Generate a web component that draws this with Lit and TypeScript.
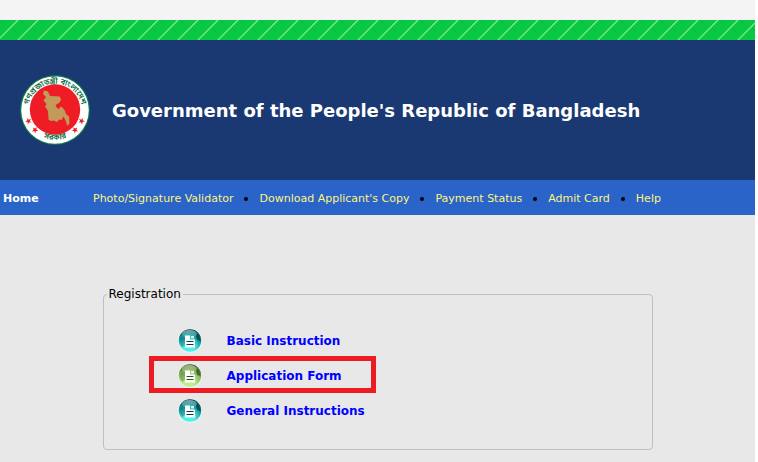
import { LitElement, html, css, svg } from "lit";
import { customElement, property } from "lit/decorators.js";

@customElement("state-seal")
export class StateSeal extends LitElement {
  static styles = css`
    :host { display: block; flex: none; width: 70px; height: 70px; }
    svg { display: block; width: 100%; height: 100%; }
    .script { font-family: "Noto Sans Bengali", "Noto Sans", "DejaVu Sans", sans-serif; font-size: 8px; font-weight: 600; fill: #0b6b40; }
  `;

  private star(x: number, y: number, turn: number) {
    return svg`<path fill="#ed1c24" transform="translate(${x} ${y}) rotate(${turn})"
      d="M0-3.4 .85-1.1 3.2-1 1.3.5 2 2.8 0 1.4-2 2.8-1.3.5-3.2-1-.85-1.1Z"/>`;
  }

  render() {
    return html`
      <svg viewBox="0 0 70 70" role="img" aria-label="Government seal of Bangladesh">
        <circle cx="35" cy="35" r="35" fill="#0b7a4a" />
        <circle cx="35" cy="35" r="33.8" fill="#fff" />
        <circle cx="35" cy="34.5" r="25.2" fill="#ee1c25" />
        <path fill="#c49a5a" d="M24 15.5 28 16.5 30 21 39.5 21.5 41 24 40 27 38 28.5 35.5 30 37 33 39 34 40.5 31.500 43 33 45 36 46 39 49 41.500 49.500 48 47.500 51 45.500 45.500 43.500 41.500 41.500 45 39 44.500 37 47 34 45.500 31 46 28.500 44.500 28 36 25 31.500 26.500 29 23.500 25.500 26 22 23 19Z" />
        <path id="upper" fill="none" d="M9 43A27 27 0 1 1 61 43" />
        <path id="lower" fill="none" d="M13 56A32 32 0 0 0 57 56" />
        <text class="script" text-anchor="middle"><textPath href="#upper" startOffset="50%">গণপ্রজাতন্ত্রী বাংলাদেশ</textPath></text>
        <text class="script" text-anchor="middle"><textPath href="#lower" startOffset="50%">সরকার</textPath></text>
        ${this.star(8.5, 46, -25)}${this.star(15, 55, -40)}${this.star(61.5, 46, 25)}${this.star(55, 55, 40)}
      </svg>`;
  }
}

@customElement("form-orb")
export class FormOrb extends LitElement {
  @property() tone = "teal";

  static styles = css`
    :host { display: block; flex: none; width: 24px; height: 24px; }
    svg { display: block; width: 100%; height: 100%; }
  `;

  render() {
    const green = this.tone === "green";
    const [dark, mid, light] = green ? ["#35541c", "#8cb862", "#baf08c"] : ["#053a40", "#159ea2", "#4ef0ea"];
    return html`
      <svg viewBox="0 0 24 24" aria-hidden="true">
        <defs>
          <radialGradient id="ball" cx=".45" cy=".85" r=".85">
            <stop offset="0" stop-color=${light} />
            <stop offset=".3" stop-color=${light} />
            <stop offset=".65" stop-color=${mid} />
            <stop offset="1" stop-color=${dark} />
          </radialGradient>
          <linearGradient id="shine" x1="0" y1="0" x2="0" y2="1">
            <stop offset="0" stop-color="#fff" stop-opacity=".5" />
            <stop offset="1" stop-color=${light} stop-opacity=".25" />
          </linearGradient>
        </defs>
        <circle cx="12" cy="12" r="12" fill="#f0f3f3" />
        <circle cx="12" cy="11.5" r="11.2" fill="url(#ball)" />
        <path d="M17.5 3.5Q22.5 7 22.5 12L19 11Z" fill=${dark} opacity=".75" />
        <path d="M2.5 9Q1.5 14 4.5 18L7 16V8Z" fill=${dark} opacity=".3" />
        <ellipse cx="11.5" cy="5" rx="7.5" ry="4" fill="url(#shine)" />
        <path d="M7 6.5h5v4h5v8H7Z" fill="#fff" />
        <path d="M13 7h3v2.5h-3Z" fill="#fff" opacity=".8" />
        <path d="M8.5 12.5h7M8.5 15.5h7" stroke=${dark} stroke-width="1.2" />
      </svg>`;
  }
}

@customElement("app-root")
export class AppRoot extends LitElement {
  static styles = css`
    :host { display: block; background: #fff; padding-right: 3px; font-family: Verdana, "DejaVu Sans", sans-serif; }
    .page { min-height: 100vh; background: #e8e8e8; }
    .strip { height: 20px; background: #f4f4f4; }
    .ribbon { display: block; width: 100%; height: 20px; background: #09c942; }
    header { display: flex; align-items: center; gap: 22px; height: 140px; padding-left: 20px; background: #1a3973; }
    h1 { margin: 0; padding-top: 2px; color: #fff; font-size: 18px; line-height: 24px; font-weight: 700; white-space: nowrap; }
    nav { box-sizing: border-box; display: flex; align-items: center; height: 35px; padding: 2px 0 0 3px; background: #2a64c8; font-size: 11px; line-height: 16px; white-space: nowrap; }
    nav a { color: #fff380; text-decoration: none; }
    nav .home { width: 90px; color: #fff; font-weight: 700; }
    .menu { display: flex; margin: 0; padding: 0; list-style: none; }
    .menu li { display: flex; align-items: center; }
    .menu li + li::before { content: ""; width: 4px; height: 4px; margin: 1px 11px 0; border-radius: 50%; background: #000; }
    main { padding: 72px 24px 12px; }
    fieldset { box-sizing: border-box; max-width: 550px; min-width: 0; margin: 0 auto; padding: 22px 20px 21px 74px; border: 1px solid #c0c0c0; border-radius: 4px; }
    legend { margin-left: -71px; padding: 0 2px; font-size: 12px; line-height: 14px; color: #000; }
    .tasks { margin: 0; padding: 0; list-style: none; }
    .tasks li { position: relative; display: flex; align-items: center; gap: 25px; height: 35px; }
    .tasks a { color: #00f; font-size: 12px; line-height: 16px; font-weight: 700; text-decoration: none; }
    .marked::after { content: ""; position: absolute; box-sizing: border-box; left: -29px; top: -2px; width: 227px; height: 37px; border: 5px solid #ed1c24; pointer-events: none; }
  `;

  private links = ["Photo/Signature Validator", "Download Applicant's Copy", "Payment Status", "Admit Card", "Help"];
  private tasks = [
    { label: "Basic Instruction", tone: "teal" },
    { label: "Application Form", tone: "green", marked: true },
    { label: "General Instructions", tone: "teal" },
  ];

  render() {
    return html`
      <div class="page">
        <div class="strip"></div>
        <svg class="ribbon" aria-hidden="true">
          <defs>
            <pattern id="dashes" width="20" height="20" patternUnits="userSpaceOnUse">
              <path d="M-2 20 18 0M18 20 20 18M-2 0 0-2" stroke="#8deaa0" stroke-width="1.2" />
              <path d="M12 8l4 4M0 0l3 3" stroke="#07ae38" stroke-width=".7" />
            </pattern>
          </defs>
          <rect width="100%" height="20" fill="url(#dashes)" />
        </svg>
        <header>
          <state-seal></state-seal>
          <h1>Government of the People's Republic of Bangladesh</h1>
        </header>
        <nav>
          <a class="home" href="#home">Home</a>
          <ul class="menu">${this.links.map((label) => html`<li><a href="#">${label}</a></li>`)}</ul>
        </nav>
        <main>
          <fieldset>
            <legend>Registration</legend>
            <ul class="tasks">
              ${this.tasks.map((t) => html`
                <li class=${t.marked ? "marked" : ""}>
                  <form-orb .tone=${t.tone}></form-orb>
                  <a href="#">${t.label}</a>
                </li>`)}
            </ul>
          </fieldset>
        </main>
      </div>`;
  }
}
